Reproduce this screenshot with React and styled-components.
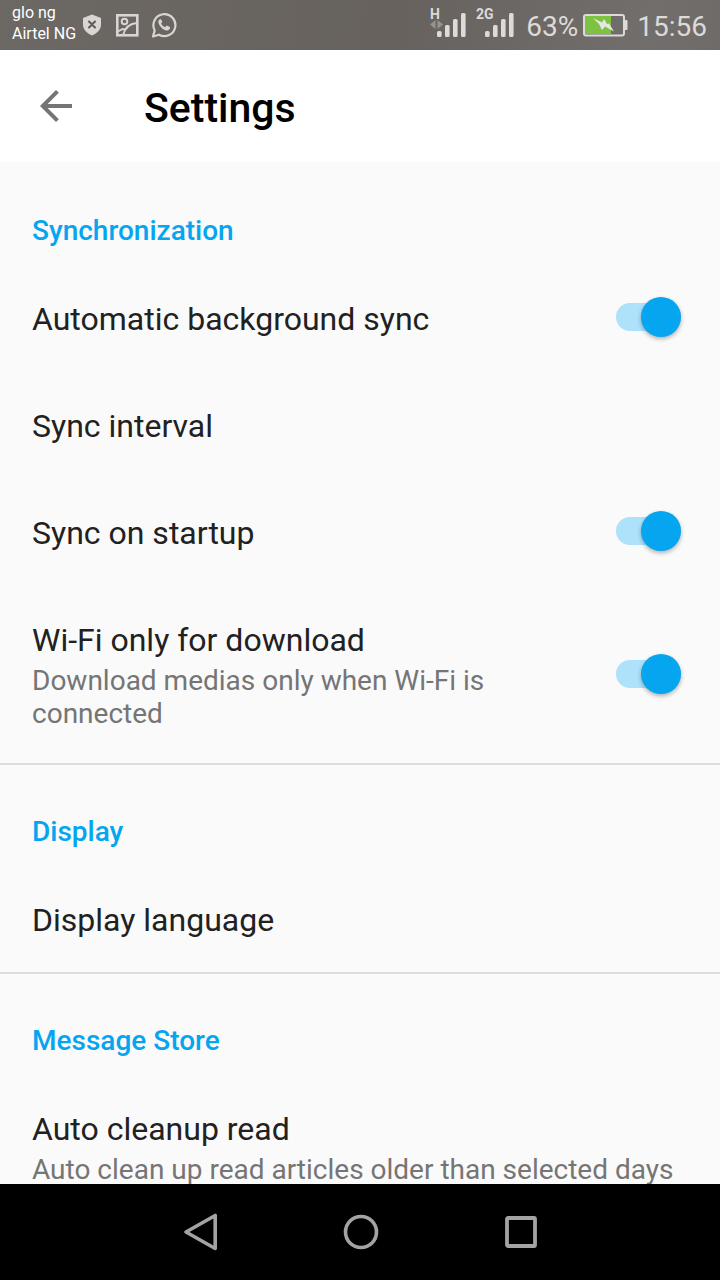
import React from "react";
import styled, { createGlobalStyle } from "styled-components";

const GlobalStyle = createGlobalStyle`
  *, *::before, *::after { box-sizing: border-box; }
  body {
    margin: 0;
    background: #fafafa;
    font-family: Roboto, "Liberation Sans", sans-serif;
  }
  button { font: inherit; border: 0; background: none; padding: 0; color: inherit; }
`;

const Screen = styled.div`
  display: flex;
  flex-direction: column;
  height: 100vh;
  overflow: hidden;
`;

const StatusBar = styled.div`
  display: flex;
  flex: none;
  justify-content: space-between;
  height: 50px;
  padding: 0 13px 0 12px;
  background: linear-gradient(100deg, #6c6864 0%, #67625e 55%, #716e6c 90%, #6f6b69 100%);
  color: #dddad7;
`;

const StatusGroup = styled.div`
  display: flex;
  align-items: center;
`;

const Carriers = styled.div`
  margin-right: 5px;
  padding-bottom: 4px;
  font-size: 16px;
  line-height: 21px;
  color: #fff;
`;

const StatusIcons = styled.div`
  display: flex;
  align-items: center;
  gap: 12px;
`;

const Signals = styled.div`
  display: flex;
  gap: 8px;
  margin-right: 12px;
`;

const StatusText = styled.span`
  padding-top: 4px;
  font-size: 28px;
  line-height: 32px;
`;

const BatteryIcon = styled.svg`
  margin: 0 9px 0 4px;
`;

const AppBar = styled.header`
  display: flex;
  flex: none;
  align-items: center;
  gap: 64px;
  height: 112px;
  padding: 0 32px;
  background: #fff;
`;

const BackButton = styled.button`
  display: flex;
  width: 48px;
  height: 48px;
`;

const Title = styled.h1`
  margin: 0;
  padding-top: 4px;
  font-size: 41px;
  line-height: 48px;
  font-weight: 500;
  color: #000;
`;

const Content = styled.main`
  flex: 1;
  min-height: 0;
  overflow: hidden;
`;

const Section = styled.section`
  border-top: 2px solid transparent;

  & + & {
    margin-top: -2px;
    border-top-color: #dcdcdc;
  }
`;

const SectionTitle = styled.h2`
  margin: 0;
  padding: 50px 32px 19px;
  font-size: 28px;
  line-height: 33px;
  font-weight: 500;
  color: #05a5f0;
`;

const Row = styled.div`
  display: flex;
  align-items: center;
  justify-content: space-between;
  width: 100%;
  padding: 34px 39px 35px 32px;
  text-align: left;
`;

const RowText = styled.span`
  flex: 1;
  max-width: ${(p) => (p.$narrow ? "500px" : "none")};
`;

const RowTitle = styled.span`
  display: block;
  font-size: 32px;
  line-height: 38px;
  color: #212121;
`;

const RowSummary = styled.span`
  display: block;
  margin-top: 5px;
  font-size: 28px;
  line-height: 33px;
  color: #757575;
`;

const Switch = styled.input`
  appearance: none;
  display: flex;
  flex: none;
  align-items: center;
  justify-content: flex-end;
  width: 65px;
  height: 28px;
  margin: 0 0 4px;
  border-radius: 14px;
  background: #aee2fa;

  &::after {
    content: "";
    width: 40px;
    height: 40px;
    flex: none;
    border-radius: 50%;
    background: #05a5f0;
    box-shadow: 0 2px 4px rgba(0, 0, 0, 0.3);
  }

  &:not(:checked) {
    justify-content: flex-start;
    background: #c4c4c4;
  }

  &:not(:checked)::after {
    background: #f1f1f1;
  }
`;

const NavBar = styled.nav`
  display: flex;
  flex: none;
  justify-content: center;
  height: 96px;
  background: #000;
`;

const NavButton = styled.button`
  display: flex;
  align-items: center;
  justify-content: center;
  width: 160px;
  color: #a3a3a3;
`;

function Signal({ label, arrows, start }) {
  return (
    <svg width="38" height="50" viewBox="0 0 38 50" fill="currentColor" role="img" aria-label={`${label} signal`}>
      <text x="0" y="19" fontSize="14" fontWeight="700">{label}</text>
      {arrows && <path d="M5.500 20v9L0 24.500zM7.500 20v9l5.500-4.500z" opacity="0.4" />}
      {[6, 12, 18, 24].map((height, i) => (
        <rect key={height} x={start + i * 8} y={37 - height} width="4.600" height={height} rx="1.500" />
      ))}
    </svg>
  );
}

function ToggleRow({ title, summary }) {
  return (
    <Row as="label">
      <RowText $narrow>
        <RowTitle>{title}</RowTitle>
        {summary && <RowSummary>{summary}</RowSummary>}
      </RowText>
      <Switch type="checkbox" role="switch" defaultChecked />
    </Row>
  );
}

function ActionRow({ title, summary }) {
  return (
    <Row as="button" type="button">
      <RowText>
        <RowTitle>{title}</RowTitle>
        {summary && <RowSummary>{summary}</RowSummary>}
      </RowText>
    </Row>
  );
}

export default function App() {
  return (
    <Screen>
      <GlobalStyle />
      <StatusBar>
        <StatusGroup>
          <Carriers>
            <div>glo ng</div>
            <div>Airtel NG</div>
          </Carriers>
          <StatusIcons>
            <svg width="22" height="24" viewBox="0 0 22 24" aria-hidden="true">
              <path d="M11 1.500 20 5v6.500c0 5-3.500 8.700-9 11-5.500-2.300-9-6-9-11V5z" fill="#d8d5d2" />
              <path d="m8 8.500 6 6m0-6-6 6" stroke="#5f5b58" strokeWidth="2" strokeLinecap="round" />
            </svg>
            <svg width="24" height="24" viewBox="0 0 24 24" fill="none" stroke="#d8d5d2" strokeWidth="2.600" aria-hidden="true">
              <rect x="2.300" y="2.300" width="20" height="20" />
              <circle cx="9.500" cy="8.500" r="2.800" strokeWidth="2" />
              <path d="M3 18.500l4.500-2.500 3 .5M8 22c2-7 6-11.500 14-12" strokeWidth="2" />
            </svg>
            <svg width="26" height="26" viewBox="0 0 26 26" aria-hidden="true">
              <path d="M2 24.500 3.700 18.300A11 11 0 1 1 8 22.700z" fill="none" stroke="#d8d5d2" strokeWidth="2.200" strokeLinejoin="round" />
              <path d="M9.200 7.200c-1 .2-2 1.500-1.800 3 .5 3.600 4.600 7.800 8.300 8.200 1.600.2 3.100-.9 3.300-2.400.1-.7-.1-.9-.6-1.200l-2.200-1c-.5-.2-.8-.1-1.100.3l-1 1.200c-1.800-.8-3.200-2-4-3.700l.9-1.200c.2-.3.200-.6.100-.9l-.9-2c-.2-.4-.5-.4-1-.3z" fill="#d8d5d2" />
            </svg>
          </StatusIcons>
        </StatusGroup>
        <StatusGroup>
          <Signals>
            <Signal label="H" arrows start={7} />
            <Signal label="2G" start={9} />
          </Signals>
          <StatusText>63%</StatusText>
          <BatteryIcon width="46" height="24" viewBox="0 0 46 24" role="img" aria-label="Charging">
            <rect x="3" y="3" width="26" height="18" fill="#7dc240" />
            <rect x="2" y="2" width="40" height="20.500" rx="2" fill="none" stroke="#dddad7" strokeWidth="2" />
            <rect x="42.500" y="7" width="3" height="10" rx="1" fill="#dddad7" />
            <path d="m11 5 9 4.500L22 6l3 5 2-.5 5 8-9-5-3 3.500-3-6z" fill="#e8e6e4" />
          </BatteryIcon>
          <StatusText>15:56</StatusText>
        </StatusGroup>
      </StatusBar>

      <AppBar>
        <BackButton type="button" aria-label="Back">
          <svg width="48" height="48" viewBox="0 0 48 48" fill="#757575" aria-hidden="true">
            <path d="M40 22H15.660L26.830 10.830 24 8 8 24l16 16 2.830-2.830L15.660 26H40z" />
          </svg>
        </BackButton>
        <Title>Settings</Title>
      </AppBar>

      <Content>
        <Section>
          <SectionTitle>Synchronization</SectionTitle>
          <ToggleRow title="Automatic background sync" />
          <ActionRow title="Sync interval" />
          <ToggleRow title="Sync on startup" />
          <ToggleRow title="Wi-Fi only for download" summary="Download medias only when Wi-Fi is connected" />
        </Section>
        <Section>
          <SectionTitle>Display</SectionTitle>
          <ActionRow title="Display language" />
        </Section>
        <Section>
          <SectionTitle>Message Store</SectionTitle>
          <ActionRow title="Auto cleanup read" summary="Auto clean up read articles older than selected days" />
        </Section>
      </Content>

      <NavBar>
        <NavButton type="button" aria-label="Back">
          <svg width="40" height="40" viewBox="0 0 40 40" fill="none" stroke="currentColor" strokeWidth="3.600" strokeLinejoin="round" aria-hidden="true">
            <path d="M35.200 3.500v33L6 20z" />
          </svg>
        </NavButton>
        <NavButton type="button" aria-label="Home">
          <svg width="40" height="40" viewBox="0 0 40 40" fill="none" stroke="currentColor" strokeWidth="3.600" aria-hidden="true">
            <circle cx="21" cy="20" r="15.500" />
          </svg>
        </NavButton>
        <NavButton type="button" aria-label="Recent apps">
          <svg width="40" height="40" viewBox="0 0 40 40" fill="none" stroke="currentColor" strokeWidth="3.800" aria-hidden="true">
            <rect x="7" y="6" width="28" height="28" rx="1" />
          </svg>
        </NavButton>
      </NavBar>
    </Screen>
  );
}
